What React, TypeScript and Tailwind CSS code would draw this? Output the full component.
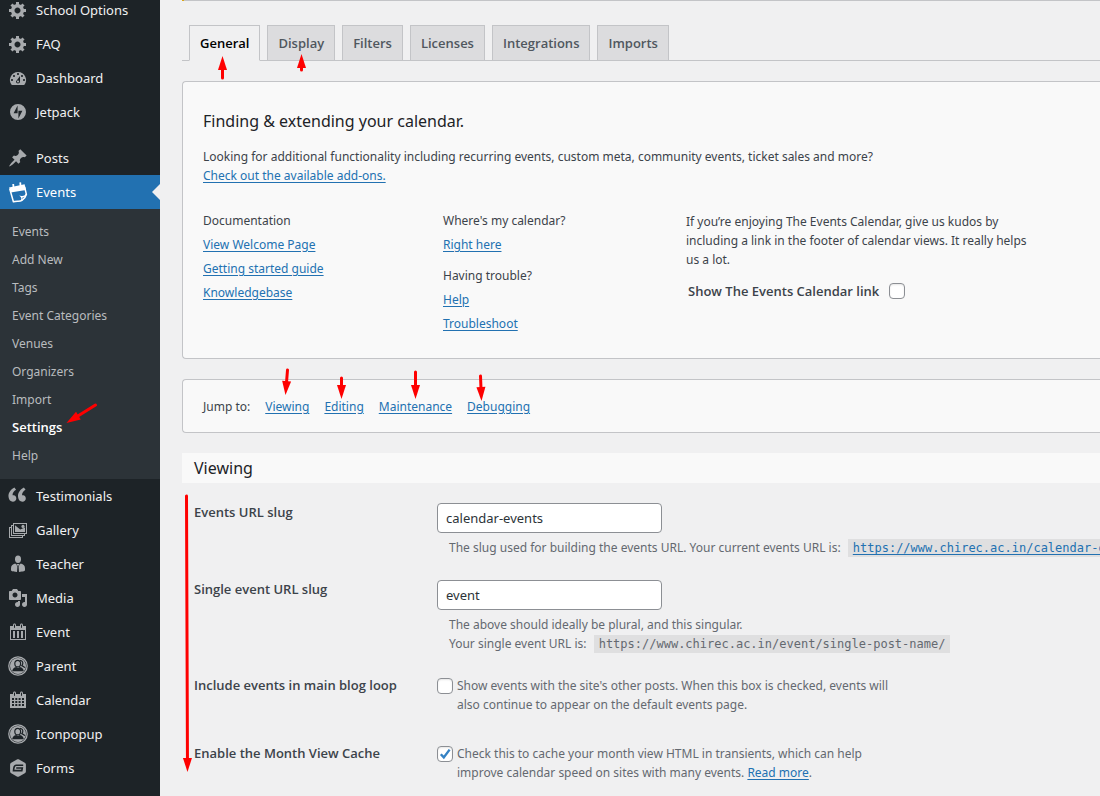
import type { ReactNode } from "react";

const regular = "font-['Noto_Sans','Open_Sans',sans-serif]";
const semi = "font-['Open_Sans','Noto_Sans',sans-serif] font-semibold";

function Glyph({ children }: { children: ReactNode }) {
  return (
    <svg viewBox="0 0 20 20" className="size-5 shrink-0" fill="currentColor" fillRule="evenodd" aria-hidden="true">
      {children}
    </svg>
  );
}

const GearIcon = () => (
  <Glyph>
    <path d="M18 12h-2.18c-.17.7-.44 1.35-.81 1.93l1.54 1.54-2.1 2.1-1.54-1.54c-.58.36-1.23.63-1.91.79V19H8v-2.18c-.68-.16-1.33-.43-1.91-.79l-1.54 1.54-2.12-2.12 1.54-1.54c-.36-.58-.63-1.23-.79-1.91H1V9.03h2.17c.16-.7.44-1.35.8-1.94L2.43 5.55l2.1-2.1 1.54 1.54c.58-.37 1.24-.64 1.93-.81V2h3v2.18c.68.16 1.33.43 1.91.79l1.54-1.54 2.12 2.12-1.54 1.54c.36.59.64 1.24.8 1.94H18V12zm-8.5 1.5c1.66 0 3-1.34 3-3s-1.34-3-3-3-3 1.34-3 3 1.34 3 3 3z" />
  </Glyph>
);

const DashboardIcon = () => (
  <Glyph>
    <path d="M3.76 17h12.48A7.998 7.998 0 0 0 10 4a7.998 7.998 0 0 0-6.24 13zM10 5c.55 0 1 .45 1 1s-.45 1-1 1-1-.45-1-1 .45-1 1-1zM6 7c.55 0 1 .45 1 1s-.45 1-1 1-1-.45-1-1 .45-1 1-1zm8 0c.55 0 1 .45 1 1s-.45 1-1 1-1-.45-1-1 .45-1 1-1zm-5.37 5.55L12 8v5.500c0 1.100-.9 2-2 2s-2-.9-2-2c0-.37.24-.68.63-.95zM4 11c.55 0 1 .45 1 1s-.45 1-1 1-1-.45-1-1 .45-1 1-1zm12 0c.55 0 1 .45 1 1s-.45 1-1 1-1-.45-1-1 .45-1 1-1zm-6 1.500c.55 0 1 .45 1 1s-.45 1-1 1-1-.45-1-1 .45-1 1-1z" />
  </Glyph>
);

const JetpackIcon = () => (
  <Glyph>
    <path d="M10 2a8 8 0 1 0 0 16 8 8 0 0 0 0-16zM9.6 11.3H5.6l4-7.8v7.8zm.8 5.2V8.7h4l-4 7.8z" />
  </Glyph>
);

const PinIcon = () => (
  <Glyph>
    <path d="M10.44 3.02l1.82-1.82 6.36 6.35-1.83 1.82c-1.05-.68-2.48-.57-3.41.36l-.75.75c-.92.93-1.04 2.35-.35 3.41l-1.83 1.82-2.41-2.41-2.8 2.79c-.42.42-3.38 2.71-3.8 2.29s1.86-3.39 2.28-3.81l2.79-2.79L4.1 9.36l1.83-1.82c1.05.69 2.48.57 3.4-.36l.75-.75c.93-.92 1.05-2.35.36-3.41z" />
  </Glyph>
);

const EventsIcon = () => (
  <svg viewBox="0 0 20 22" className="h-[22px] w-5 shrink-0" fill="none" stroke="currentColor" aria-hidden="true">
    <path d="M1 6.6 L16.6 3.2 L18 9 L2.6 11.6Z" fill="currentColor" stroke="none" />
    <path d="M5.6 7 L5.2 3 M12.6 5 L12.2 1.4" strokeWidth="1.8" />
    <path d="M1.8 8 L5.4 20.8 C8.6 19.4 11.4 21 14 19.4 C16.2 18 17.8 15.8 18.4 13.4 L16.6 6" strokeWidth="1.5" strokeLinejoin="round" />
    <path d="M13.6 19.4 C14.4 17.6 13.8 16.2 13.2 15.6 C15.2 16 17.6 14.8 18.4 13" strokeWidth="1.3" />
  </svg>
);

const QuoteIcon = () => (
  <Glyph>
    <path
      d="M9.49 13.22c0-.74-.2-1.38-.61-1.9-.62-.78-1.83-.88-2.53-.72-.29-1.65 1.11-3.75 2.92-4.65L7.88 4c-2.73 1.3-5.42 4.28-4.96 8.05C3.21 14.43 4.59 16 6.54 16c.85 0 1.56-.25 2.12-.75s.83-1.18.83-2.03zm8.05 0c0-.74-.2-1.38-.61-1.9-.63-.78-1.83-.88-2.53-.72-.29-1.65 1.11-3.75 2.92-4.65L15.93 4c-2.73 1.3-5.41 4.28-4.95 8.05.29 2.38 1.66 3.95 3.61 3.95.85 0 1.56-.25 2.12-.75s.83-1.18.83-2.03z"
      transform="translate(-2.9 -3.2) scale(1.18)"
    />
  </Glyph>
);

const GalleryIcon = () => (
  <Glyph>
    <path d="M5 3h14v11h-2v2h-2v2H1V7h2V5h2V3zm1 1v9h12V4H6zM4 6v9h12v-1H5V6H4zM2 8v9h12v-1H3V8H2z" />
    <path d="M7 5.2L12.2 9.4L17 7.6V12H7z" />
    <circle cx="15" cy="6.4" r="1.6" />
  </Glyph>
);

const BusinessmanIcon = () => (
  <Glyph>
    <ellipse cx="10" cy="5.2" rx="3" ry="3.7" />
    <path d="M7.2 9.6C4.4 10.2 3 11.8 3 14.4V16c0 1 1.4 1.6 6 1.9L9.4 12.4 8.6 11 9.2 10.1h1.6l.6.9-.8 1.4.4 5.5c4.6-.3 6-.9 6-1.9v-1.6c0-2.6-1.4-4.2-4.2-4.8L10 12z" />
  </Glyph>
);

const MediaIcon = () => (
  <Glyph>
    <path d="M13 11V4c0-.55-.45-1-1-1h-1.67L9 1H5L3.67 3H2c-.55 0-1 .45-1 1v7c0 .55.45 1 1 1h10c.55 0 1-.45 1-1zM7 4.5c1.38 0 2.5 1.12 2.5 2.5S8.38 9.5 7 9.5 4.5 8.38 4.5 7 5.62 4.5 7 4.5zM14 6h5v10.5c0 1.38-1.12 2.5-2.5 2.5S14 17.88 14 16.5s1.12-2.5 2.5-2.5c.17 0 .34.02.5.05V9h-3V6zm-4 8.05V13h2v3.5c0 1.38-1.12 2.5-2.5 2.5S7 17.88 7 16.5 8.12 14 9.5 14c.17 0 .34.02.5.05z" />
  </Glyph>
);

const CalendarIcon = () => (
  <Glyph>
    <path d="M15 4h3v14H2V4h3V3c0-.83.67-1.5 1.5-1.5S8 2.17 8 3v1h4V3c0-.83.67-1.5 1.5-1.5S15 2.17 15 3v1zM6 3v2.5c0 .28.22.5.5.5s.5-.22.5-.5V3c0-.28-.22-.5-.5-.5S6 2.72 6 3zm7 0v2.5c0 .28.22.5.5.5s.5-.22.5-.5V3c0-.28-.22-.5-.5-.5s-.5.22-.5.5zm4 14V8H3v9h14z" />
    <path d="M5 9h2v7H5zM9 9h2v7H9zM13 9h2v7h-2z" />
  </Glyph>
);

const CalendarGridIcon = () => (
  <Glyph>
    <path d="M15 4h3v14H2V4h3V3c0-.83.67-1.5 1.5-1.5S8 2.17 8 3v1h4V3c0-.83.67-1.5 1.5-1.5S15 2.17 15 3v1zM6 3v2.5c0 .28.22.5.5.5s.5-.22.5-.5V3c0-.28-.22-.5-.5-.5S6 2.72 6 3zm7 0v2.5c0 .28.22.5.5.5s.5-.22.5-.5V3c0-.28-.22-.5-.5-.5s-.5.22-.5.5zM4 8v2h2V8zm3.3 0v2h2V8zm3.3 0v2h2V8zM14 8v2h2V8zM4 11v2h2v-2zm3.3 0v2h2v-2zm3.3 0v2h2v-2zM14 11v2h2v-2zM4 14v2h2v-2zm3.3 0v2h2v-2zm3.3 0v2h2v-2zM14 14v2h2v-2z" />
  </Glyph>
);

const UserCircleIcon = () => (
  <Glyph>
    <circle cx="10" cy="10" r="9.2" fill="none" stroke="currentColor" strokeWidth="1.3" />
    <circle cx="10" cy="10" r="8" />
    <path d="M4.200 15.200c.2-2.400 1.500-3.500 4-4.200L10 12l1.800-1c2.500.7 3.800 1.800 4 4.200z" fill="#1d2327" />
    <g fill="none" stroke="#1d2327" strokeWidth="1.2">
      <path d="M9.700 4.400a2.900 2.900 0 0 1 2.900 3c0 1.800-1.200 3.500-2.900 3.500S6.800 9.200 6.800 7.400a2.900 2.900 0 0 1 2.900-3z" />
      <path d="M12 4.400c2 .2 3 1.500 2.800 3-.1 1-.6 1.800-1 2.200 1.500.6 2.600 1.200 3 2.200" />
    </g>
  </Glyph>
);

const FormsIcon = () => (
  <Glyph>
    <path d="M10 1.200c.4 0 .8.1 1.100.3l5.700 3.300c.7.4 1.100 1 1.100 1.700v7c0 .7-.4 1.300-1.100 1.700l-5.700 3.300c-.7.4-1.500.4-2.200 0l-5.700-3.300c-.7-.4-1.100-1-1.100-1.700v-7c0-.7.4-1.300 1.100-1.700l5.700-3.300c.3-.2.7-.3 1.100-.3z" />
    <path d="M15.200 7.300H8.300c-1.700 0-2.300 1.600-2.500 3-.2 1.200-.3 2.300-.3 2.300h8.300l.5-2.600H8.200" fill="none" stroke="#1d2327" strokeWidth="1.6" />
  </Glyph>
);

const PageIcon = () => (
  <Glyph>
    <path d="M6 4h9v14H6z" />
  </Glyph>
);

const submenu = ["Events", "Add New", "Tags", "Event Categories", "Venues", "Organizers", "Import", "Settings", "Help"];

function MenuItem({ icon, label, current = false }: { icon: ReactNode; label: string; current?: boolean }) {
  return (
    <li>
      <a
        href="#"
        className={
          current
            ? "relative flex h-[34px] items-center gap-2 bg-[#2271b1] pl-2 text-white"
            : "flex h-[34px] items-center gap-2 pl-2 text-[#f0f0f1]"
        }
      >
        <span className={current ? "text-white" : "text-[#a7aaad]"}>{icon}</span>
        <span>{label}</span>
        {current && (
          <span className="absolute top-1/2 right-0 -translate-y-1/2 border-8 border-transparent border-r-[#f0f0f1]" />
        )}
      </a>
    </li>
  );
}

function Sidebar() {
  return (
    <nav aria-label="Main menu" className="w-40 shrink-0 bg-[#1d2327] text-[13px] leading-[18px]">
      <ul className="-mt-[7px]">
        <MenuItem icon={<GearIcon />} label="School Options" />
        <MenuItem icon={<GearIcon />} label="FAQ" />
        <MenuItem icon={<DashboardIcon />} label="Dashboard" />
        <MenuItem icon={<JetpackIcon />} label="Jetpack" />
        <li aria-hidden="true" className="h-3" />
        <MenuItem icon={<PinIcon />} label="Posts" />
        <MenuItem icon={<EventsIcon />} label="Events" current />
        <li className="bg-[#2c3338] py-[9px] text-xs">
          <ul>
            {submenu.map((name) => (
              <li key={name}>
                <a
                  href="#"
                  className={
                    name === "Settings"
                      ? "flex h-7 items-center pl-3 font-['Open_Sans','Noto_Sans',sans-serif] text-[13px] font-semibold text-white"
                      : "flex h-7 items-center pl-3 text-[#b9bcbf]"
                  }
                >
                  {name}
                </a>
              </li>
            ))}
          </ul>
        </li>
        <MenuItem icon={<QuoteIcon />} label="Testimonials" />
        <MenuItem icon={<GalleryIcon />} label="Gallery" />
        <MenuItem icon={<BusinessmanIcon />} label="Teacher" />
        <MenuItem icon={<MediaIcon />} label="Media" />
        <MenuItem icon={<CalendarIcon />} label="Event" />
        <MenuItem icon={<UserCircleIcon />} label="Parent" />
        <MenuItem icon={<CalendarGridIcon />} label="Calendar" />
        <MenuItem icon={<UserCircleIcon />} label="Iconpopup" />
        <MenuItem icon={<FormsIcon />} label="Forms" />
        <MenuItem icon={<PageIcon />} label="" />
      </ul>
    </nav>
  );
}

function Link({ children }: { children: ReactNode }) {
  return (
    <a href="#" className="text-[#2271b1] underline underline-offset-2">
      {children}
    </a>
  );
}

function Checkbox({ id, checked = false }: { id: string; checked?: boolean }) {
  return (
    <span className="grid size-4 shrink-0">
      <input
        id={id}
        type="checkbox"
        defaultChecked={checked}
        className="peer col-start-1 row-start-1 size-4 appearance-none rounded border border-[#8c8f94] bg-white shadow-[inset_0_1px_2px_rgba(0,0,0,0.1)]"
      />
      <svg
        viewBox="0 0 16 16"
        className="pointer-events-none invisible col-start-1 row-start-1 size-4 peer-checked:visible"
        fill="none"
        stroke="#3582c4"
        strokeWidth="2.4"
        aria-hidden="true"
      >
        <path d="M3.800 8.200L6.800 11.400L12.600 3.600" />
      </svg>
    </span>
  );
}

const tabs = ["General", "Display", "Filters", "Licenses", "Integrations", "Imports"];

function Tabs() {
  return (
    <div className="border-b border-[#c3c4c7]">
      <div role="tablist" className={`-mb-px flex gap-[7px] pl-[7px] text-[13px] leading-6 ${semi}`}>
        {tabs.map((name, i) => (
          <button
            key={name}
            type="button"
            role="tab"
            aria-selected={i === 0}
            className={
              i === 0
                ? "border border-[#c3c4c7] border-b-[#f0f0f1] bg-[#f0f0f1] px-2.5 py-[5px] text-black"
                : "border border-[#c3c4c7] bg-[#dcdcde] px-2.5 py-[5px] text-[#50575e]"
            }
          >
            {name}
          </button>
        ))}
      </div>
    </div>
  );
}

function LinkGroup({ title, links }: { title: string; links: string[] }) {
  return (
    <div>
      <p>{title}</p>
      <ul>
        {links.map((name) => (
          <li key={name}>
            <Link>{name}</Link>
          </li>
        ))}
      </ul>
    </div>
  );
}

function IntroPanel() {
  return (
    <section className="mt-5 rounded-l border border-r-0 border-[#c3c4c7] bg-[#f9f9f9] pt-[27px] pb-[22px] pl-5">
      <h2 className="text-base leading-6 text-[#1d2327]">Finding &amp; extending your calendar.</h2>
      <p className="mt-3.5 leading-[19px]">
        Looking for additional functionality including recurring events, custom meta, community events, ticket sales and
        more?
        <br />
        <Link>Check out the available add-ons.</Link>
      </p>
      <div className="mt-6 grid grid-cols-[240px_243px_1fr] leading-6">
        <LinkGroup title="Documentation" links={["View Welcome Page", "Getting started guide", "Knowledgebase"]} />
        <div className="space-y-[7px]">
          <LinkGroup title="Where's my calendar?" links={["Right here"]} />
          <LinkGroup title="Having trouble?" links={["Help", "Troubleshoot"]} />
        </div>
        <div className="pt-[3px]">
          <p className="max-w-[350px] leading-[19px]">
            If you’re enjoying The Events Calendar, give us kudos by including a link in the footer of calendar views. It
            really helps us a lot.
          </p>
          <div className="mt-2.5 flex items-center gap-2.5 pl-0.5">
            <label htmlFor="show-link" className={`text-[13px] leading-6 ${semi}`}>
              Show The Events Calendar link
            </label>
            <Checkbox id="show-link" />
          </div>
        </div>
      </div>
    </section>
  );
}

function Row({ label, htmlFor, children }: { label: string; htmlFor: string; children: ReactNode }) {
  return (
    <div className="grid grid-cols-[243px_1fr]">
      <label htmlFor={htmlFor} className={`text-[13px] leading-[18px] text-[#3c434a] ${semi}`}>
        {label}
      </label>
      <div className="min-w-0 text-[#646970]">{children}</div>
    </div>
  );
}

const field =
  "block h-[30px] w-[225px] rounded border border-[#8c8f94] bg-white px-2 text-[13px] text-[#2c3338] outline-none";
const code = "ml-1 bg-[#dfdfe0] px-[5px] py-0.5 font-['DejaVu_Sans_Mono',monospace] text-xs";

function ViewingForm() {
  return (
    <form className="mt-5 space-y-[23px] pl-3 leading-[19px]">
      <Row label="Events URL slug" htmlFor="events-slug">
        <input id="events-slug" type="text" defaultValue="calendar-events" className={field} />
        <p className="mt-[5px] overflow-hidden pl-3 whitespace-nowrap">
          The slug used for building the events URL. Your current events URL is:{" "}
          <code className={code}>
            <Link>https://www.chirec.ac.in/calendar-events/</Link>
          </code>
        </p>
      </Row>
      <Row label="Single event URL slug" htmlFor="single-slug">
        <input id="single-slug" type="text" defaultValue="event" className={field} />
        <p className="mt-[5px] pl-3">
          The above should ideally be plural, and this singular.
          <br />
          Your single event URL is: <code className={code}>https://www.chirec.ac.in/event/single-post-name/</code>
        </p>
      </Row>
      <Row label="Include events in main blog loop" htmlFor="blog-loop">
        <div className="flex gap-1 pb-[7px]">
          <span className="pt-0.5">
            <Checkbox id="blog-loop" />
          </span>
          <p className="max-w-[450px]">
            Show events with the site's other posts. When this box is checked, events will also continue to appear on the
            default events page.
          </p>
        </div>
      </Row>
      <Row label="Enable the Month View Cache" htmlFor="month-cache">
        <div className="flex gap-1 pb-[7px]">
          <span className="pt-0.5">
            <Checkbox id="month-cache" checked />
          </span>
          <p className="max-w-[450px]">
            Check this to cache your month view HTML in transients, which can help
            <br />
            improve calendar speed on sites with many events. <Link>Read more</Link>.
          </p>
        </div>
      </Row>
    </form>
  );
}

const arrows = [
  [222, 78, 222, 56],
  [301, 70, 301, 54],
  [95, 405, 66, 423],
  [287, 370, 285, 395],
  [341, 378, 341, 399],
  [415, 372, 415, 399],
  [480, 376, 481, 401],
  [186, 496, 187, 772],
];

function Arrows() {
  return (
    <svg className="pointer-events-none absolute inset-0 size-full" fill="#fe0000" stroke="#fe0000" aria-hidden="true">
      {arrows.map(([x1, y1, x2, y2]) => {
        const length = Math.hypot(x2 - x1, y2 - y1);
        const angle = (Math.atan2(y2 - y1, x2 - x1) * 180) / Math.PI;
        return (
          <g key={`${x1}-${y1}`} transform={`translate(${x2 + 0.5} ${y2}) rotate(${angle})`}>
            <path d={`M${-length} 0H-12`} strokeWidth="3" strokeLinecap="round" />
            <path d="M0 0L-14 -4.500V4.500Z" stroke="none" />
          </g>
        );
      })}
    </svg>
  );
}

export default function App() {
  return (
    <div className={`relative flex h-screen overflow-hidden bg-[#f0f0f1] text-xs text-[#3c434a] ${regular}`}>
      <Sidebar />
      <main className="min-w-0 flex-1 pl-[22px]">
        <div className="h-px border-l-2 border-[#dba617] bg-[#c3c4c7]" />
        <div className="mt-6">
          <Tabs />
        </div>
        <IntroPanel />
        <nav
          aria-label="Jump to section"
          className="mt-5 flex gap-[15px] rounded-l border border-r-0 border-[#c3c4c7] bg-[#f9f9f9] pt-[17px] pb-[15px] pl-5 leading-5"
        >
          <span>Jump to:</span>
          <Link>Viewing</Link>
          <Link>Editing</Link>
          <Link>Maintenance</Link>
          <Link>Debugging</Link>
        </nav>
        <h3 className="mt-5 bg-[#f9f9f9] pt-px pl-3 text-base leading-[29px] text-[#1d2327]">Viewing</h3>
        <ViewingForm />
      </main>
      <Arrows />
    </div>
  );
}
